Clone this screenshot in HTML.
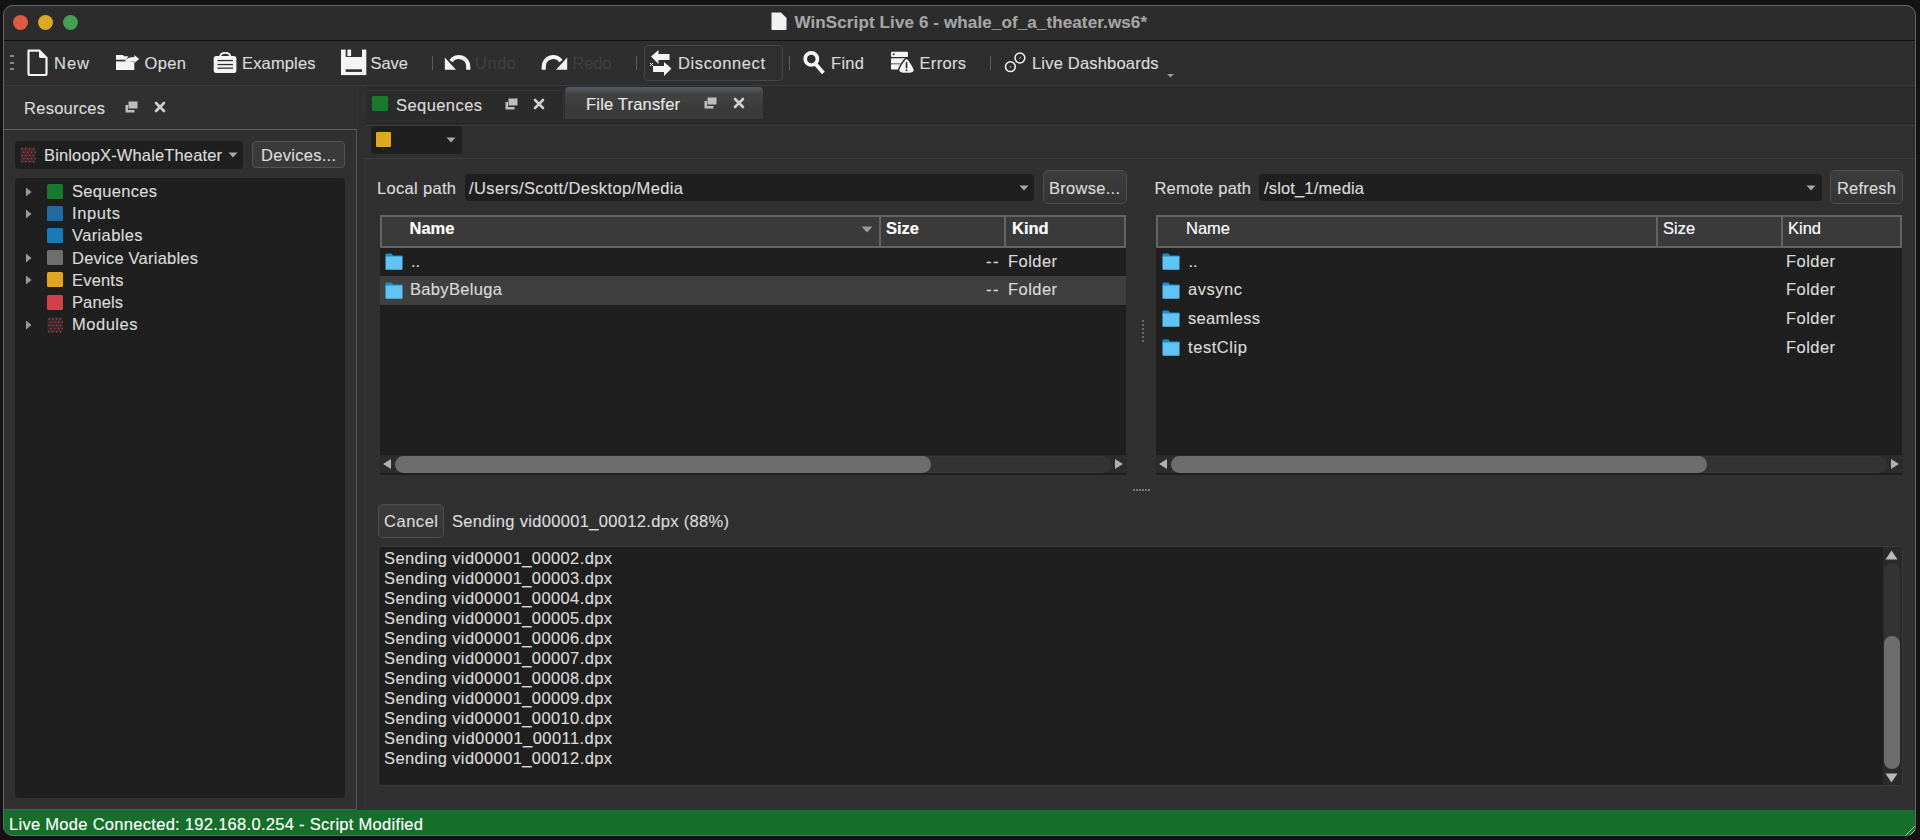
<!DOCTYPE html>
<html><head><meta charset="utf-8">
<style>
*{box-sizing:border-box;margin:0;padding:0}
html,body{width:1920px;height:840px;overflow:hidden;background:#131313;font-family:"Liberation Sans",sans-serif;color:#dcdcdc}
.a{position:absolute}
.t{position:absolute;white-space:nowrap;font-size:16.5px;line-height:20px;-webkit-text-stroke:0.15px currentColor}
svg{display:block}
</style></head><body>
<div class="a" style="left:3px;top:5px;width:1913px;height:831px;background:#303030;border-radius:10px;"></div>
<div class="a" style="left:3px;top:5px;width:1913px;height:35px;background:#2c2c2c;border-radius:10px 10px 0 0;"></div>
<div class="a" style="left:3px;top:40px;width:1913px;height:1px;background:#121212;"></div>
<div class="a" style="left:3px;top:41px;width:1913px;height:44px;background:#2e2e2e;"></div>
<div class="a" style="left:3px;top:85px;width:1913px;height:1px;background:#3a3a3a;"></div>
<div class="a" style="left:3px;top:5px;width:1913px;height:831px;border:1px solid #666666;border-radius:10px;z-index:5;"></div>
<div class="a" style="left:13px;top:15px;width:15px;height:15px;border-radius:50%;background:#de5a44;"></div>
<div class="a" style="left:38px;top:15px;width:15px;height:15px;border-radius:50%;background:#dfa822;"></div>
<div class="a" style="left:63px;top:15px;width:15px;height:15px;border-radius:50%;background:#44a055;"></div>
<svg class="a" style="left:770px;top:11px" width="18" height="20" viewBox="0 0 18 20"><path d="M1.5 1.5 h9.5 l5.5 5.5 v11 a1 1 0 0 1 -1 1 h-13 a1 1 0 0 1 -1 -1z" fill="#f2f2f2"/></svg>
<div class="t" style="left:794.4px;top:12.5px;font-size:17px;color:#a6a6a6;font-weight:bold;letter-spacing:0.124px;">WinScript Live 6 - whale_of_a_theater.ws6*</div>
<div class="a" style="left:10px;top:55px;width:4px;height:2px;background:#8a8a8a;"></div>
<div class="a" style="left:10px;top:62px;width:4px;height:2px;background:#8a8a8a;"></div>
<div class="a" style="left:10px;top:68px;width:4px;height:2px;background:#8a8a8a;"></div>
<svg class="a" style="left:26px;top:48px" width="24" height="29" viewBox="0 0 24 29"><path d="M2.5 2.7 h11 l7 7 v15.8 a1.5 1.5 0 0 1 -1.5 1.5 h-15 a1.5 1.5 0 0 1 -1.5 -1.5z" fill="none" stroke="#f4f4f4" stroke-width="2.2" stroke-linejoin="round"/><path d="M13 2 v6.5 a1.5 1.5 0 0 0 1.5 1.5 h6.5z" fill="#f4f4f4"/></svg>
<div class="t" style="left:54px;top:52.5px;font-size:16.5px;color:#dadada;letter-spacing:0.996px;">New</div>
<svg class="a" style="left:114px;top:52px" width="28" height="20" viewBox="0 0 28 20"><path d="M2 3 H9 L10 4.3 H14.5 L12 7.7 H2z" fill="#f4f4f4"/><path d="M2 9.4 H11.5 L14 9.4 H20.3 V18 H2z" fill="#f4f4f4"/><path d="M10.5 9.4 Q13.5 5 20.4 5 V3 L25.2 7 L20.4 11 V9 Q17 9 15 10z" fill="#f4f4f4"/></svg>
<div class="t" style="left:144.5px;top:52.5px;font-size:16.5px;color:#dadada;letter-spacing:0.379px;">Open</div>
<svg class="a" style="left:212px;top:51px" width="26" height="24" viewBox="0 0 26 24"><path d="M8 5.5 C8.8 0.6 17.6 0.6 18.4 5.5" fill="none" stroke="#f4f4f4" stroke-width="1.8"/><rect x="1.7" y="5.1" width="22.7" height="16.9" rx="2.5" fill="#f4f4f4"/><rect x="5.5" y="8.9" width="15.5" height="1.3" fill="#2e2e2e"/><rect x="5.5" y="12.9" width="15.5" height="1.3" fill="#2e2e2e"/><rect x="5.5" y="16.5" width="15.5" height="1.3" fill="#2e2e2e"/></svg>
<div class="t" style="left:242px;top:52.5px;font-size:16.5px;color:#dadada;letter-spacing:0.151px;">Examples</div>
<svg class="a" style="left:340px;top:49px" width="28" height="27" viewBox="0 0 28 27"><rect x="1" y="0.6" width="25.3" height="25.5" fill="#f4f4f4"/><rect x="5.7" y="0" width="16.3" height="7.9" rx="0.6" fill="#2e2e2e"/><rect x="7.4" y="0.6" width="3.7" height="6.5" fill="#f4f4f4"/><rect x="5.7" y="20.3" width="16.3" height="2.6" fill="#2e2e2e"/></svg>
<div class="t" style="left:370.5px;top:52.5px;font-size:16.5px;color:#dadada;letter-spacing:-0.036px;">Save</div>
<div class="a" style="left:432px;top:56px;width:1.2px;height:14px;background:#5e5e5e;"></div>
<svg class="a" style="left:440px;top:48px" width="32" height="26" viewBox="0 0 32 26"><path d="M28.25 21.7 V18.5 A9.45 9.45 0 0 0 11.06 13.08" fill="none" stroke="#f4f4f4" stroke-width="4.2"/><path d="M4.8 9.6 V21.7 H16z" fill="#f4f4f4"/></svg>
<div class="t" style="left:475px;top:52.5px;font-size:16.5px;color:#404040;letter-spacing:0.518px;">Undo</div>
<svg class="a" style="left:540.2px;top:48px;transform:scaleX(-1)" width="32" height="26" viewBox="0 0 32 26"><path d="M28.25 21.7 V18.5 A9.45 9.45 0 0 0 11.06 13.08" fill="none" stroke="#f4f4f4" stroke-width="4.2"/><path d="M4.8 9.6 V21.7 H16z" fill="#f4f4f4"/></svg>
<div class="t" style="left:572.5px;top:52.5px;font-size:16.5px;color:#404040;letter-spacing:-0.149px;">Redo</div>
<div class="a" style="left:636px;top:56px;width:1.2px;height:14px;background:#5e5e5e;"></div>
<div class="a" style="left:644px;top:45px;width:139px;height:36px;border:1px solid #474747;border-radius:4px;background:#2f2f2f;"></div>
<svg class="a" style="left:648px;top:49px" width="26" height="28" viewBox="0 0 26 28"><path d="M3 7.5 l7.5 -6.5 v4 h11 v6 h-11 v4z" fill="#f4f4f4"/><path d="M23.5 19.5 l-7.5 -6.5 v4 h-11 v6 h11 v4z" fill="#f4f4f4"/><path d="M2 14 l3 3 M5 14 l-3 3" stroke="#f4f4f4" stroke-width="1"/></svg>
<div class="t" style="left:678px;top:52.5px;font-size:16.5px;color:#dadada;letter-spacing:0.598px;">Disconnect</div>
<div class="a" style="left:789px;top:56px;width:1.2px;height:14px;background:#5e5e5e;"></div>
<svg class="a" style="left:802px;top:50px" width="24" height="25" viewBox="0 0 24 25"><circle cx="9.3" cy="8.9" r="6.1" fill="none" stroke="#f4f4f4" stroke-width="3.7"/><path d="M13.2 13.6 L21.4 23" stroke="#f4f4f4" stroke-width="3.8"/></svg>
<div class="t" style="left:831px;top:52.5px;font-size:16.5px;color:#dadada;letter-spacing:0.301px;">Find</div>
<svg class="a" style="left:890px;top:50px" width="26" height="26" viewBox="0 0 26 26"><rect x="1" y="1.7" width="17" height="5.2" rx="1" fill="#f4f4f4"/><circle cx="3.6" cy="4.3" r="1" fill="#2e2e2e"/><rect x="1" y="8.2" width="14" height="5.3" rx="0.8" fill="#f4f4f4"/><rect x="1" y="14.3" width="10" height="5.3" rx="0.8" fill="#f4f4f4"/><path d="M16.5 8.3 C18.2 8.3 24.6 18 24.4 20.5 C24.2 23.6 19 23.5 16.5 23.5 C14 23.5 8.8 23.6 8.6 20.5 C8.4 18 14.8 8.3 16.5 8.3 Z" fill="#f4f4f4" stroke="#2e2e2e" stroke-width="1.5"/><rect x="15.7" y="12" width="1.7" height="6.5" rx="0.8" fill="#2e2e2e"/><circle cx="16.55" cy="20.3" r="0.95" fill="#2e2e2e"/></svg>
<div class="t" style="left:919.5px;top:52.5px;font-size:16.5px;color:#dadada;letter-spacing:0.317px;">Errors</div>
<div class="a" style="left:990px;top:56px;width:1.2px;height:14px;background:#5e5e5e;"></div>
<svg class="a" style="left:1003px;top:51px" width="24" height="23" viewBox="0 0 24 23"><circle cx="7.4" cy="15.7" r="4.9" fill="none" stroke="#f4f4f4" stroke-width="1.5"/><circle cx="16.9" cy="7" r="4.9" fill="none" stroke="#f4f4f4" stroke-width="1.5"/><path d="M6.8 15 l1.2 1.5 M16.3 7.8 l1.6 -2" stroke="#cfcfcf" stroke-width="0.9"/></svg>
<div class="t" style="left:1032px;top:52.5px;font-size:16.5px;color:#dadada;letter-spacing:0.191px;">Live Dashboards</div>
<svg class="a" style="left:1166px;top:73px" width="10" height="6" viewBox="0 0 10 6"><path d="M1 1 h7 l-3.5 3.5z" fill="#9a9a9a"/></svg>
<div class="a" style="left:3px;top:810px;width:1913px;height:26px;background:#166e2b;border-radius:0 0 10px 10px;"></div>
<svg class="a" style="left:1900px;top:820px;z-index:6" width="16" height="16" viewBox="0 0 16 16"><path d="M15 6 L6 15 M15 10 L10 15" stroke="#9fc4a6" stroke-width="1"/></svg>
<div class="t" style="left:9px;top:813.5px;font-size:16.5px;color:#ffffff;letter-spacing:0.294px;">Live Mode Connected: 192.168.0.254 - Script Modified</div>
<div class="t" style="left:24px;top:98.0px;font-size:16.5px;color:#dadada;letter-spacing:0.267px;">Resources</div>
<svg class="a" style="left:125px;top:101px" width="13" height="12" viewBox="0 0 13 12"><rect x="3.5" y="0.5" width="9" height="7" fill="#bdbdbd"/><path d="M0.5 4 v7.5 h9 v-2.5 h-6.5 v-5z" fill="#bdbdbd"/></svg>
<svg class="a" style="left:154px;top:101px" width="12" height="12" viewBox="0 0 12 12"><path d="M2 2 l8 8 M10 2 l-8 8" stroke="#cfcfcf" stroke-width="2.6" stroke-linecap="round"/></svg>
<div class="a" style="left:3px;top:129px;width:354px;height:1px;background:#56616b;"></div>
<div class="a" style="left:356px;top:129px;width:1px;height:681px;background:#4d5862;"></div>
<div class="a" style="left:3px;top:809px;width:354px;height:1px;background:#4d5862;"></div>
<div class="a" style="left:15px;top:141px;width:228px;height:28px;background:#1f1f1f;border-radius:4px;"></div>
<svg class="a" style="left:20px;top:147px" width="16" height="16" viewBox="0 0 16 16"><rect x="0.5" y="0.5" width="15" height="15" fill="#3a2a2c"/><g fill="#c8404a"><circle cx="2.0" cy="2.0" r="0.7"/><circle cx="3.9" cy="5.2" r="0.7"/><circle cx="2.0" cy="8.4" r="0.7"/><circle cx="3.9" cy="11.600000000000001" r="0.7"/><circle cx="2.0" cy="14.8" r="0.7"/><circle cx="5.8" cy="2.0" r="0.7"/><circle cx="7.699999999999999" cy="5.2" r="0.7"/><circle cx="5.8" cy="8.4" r="0.7"/><circle cx="7.699999999999999" cy="11.600000000000001" r="0.7"/><circle cx="5.8" cy="14.8" r="0.7"/><circle cx="9.6" cy="2.0" r="0.7"/><circle cx="11.5" cy="5.2" r="0.7"/><circle cx="9.6" cy="8.4" r="0.7"/><circle cx="11.5" cy="11.600000000000001" r="0.7"/><circle cx="9.6" cy="14.8" r="0.7"/><circle cx="13.399999999999999" cy="2.0" r="0.7"/><circle cx="15.299999999999999" cy="5.2" r="0.7"/><circle cx="13.399999999999999" cy="8.4" r="0.7"/><circle cx="15.299999999999999" cy="11.600000000000001" r="0.7"/><circle cx="13.399999999999999" cy="14.8" r="0.7"/></g></svg>
<div class="t" style="left:44px;top:145.0px;font-size:16.5px;color:#dadada;letter-spacing:0.141px;">BinloopX-WhaleTheater</div>
<svg class="a" style="left:228px;top:152px" width="10" height="6" viewBox="0 0 10 6"><path d="M0.5 0.5 h9 l-4.5 5z" fill="#a8a8a8"/></svg>
<div class="a" style="left:252px;top:141px;width:93px;height:27px;background:#3a3a3a;border:1px solid #535353;border-radius:4px;"></div>
<div class="t" style="left:261px;top:145.0px;font-size:16.5px;color:#dadada;letter-spacing:0.285px;">Devices...</div>
<div class="a" style="left:15px;top:178px;width:330px;height:620px;background:#1f1f1f;border-radius:4px;"></div>
<svg class="a" style="left:25px;top:186.5px" width="8" height="10" viewBox="0 0 8 10"><path d="M1 0.5 v9 l5.5 -4.5z" fill="#9a9a9a"/></svg>
<div class="a" style="left:47px;top:184px;width:16px;height:15px;background:#177a2c;border-radius:1.5px;"></div>
<div class="t" style="left:72px;top:181.0px;font-size:16.5px;color:#dadada;letter-spacing:0.304px;">Sequences</div>
<svg class="a" style="left:25px;top:208.7px" width="8" height="10" viewBox="0 0 8 10"><path d="M1 0.5 v9 l5.5 -4.5z" fill="#9a9a9a"/></svg>
<div class="a" style="left:47px;top:206px;width:16px;height:15px;background:#236b9f;border-radius:1.5px;"></div>
<div class="t" style="left:72px;top:203.2px;font-size:16.5px;color:#dadada;letter-spacing:0.610px;">Inputs</div>
<div class="a" style="left:47px;top:228px;width:16px;height:15px;background:#1a7ab8;border-radius:1.5px;"></div>
<div class="t" style="left:72px;top:225.4px;font-size:16.5px;color:#dadada;letter-spacing:0.367px;">Variables</div>
<svg class="a" style="left:25px;top:253.2px" width="8" height="10" viewBox="0 0 8 10"><path d="M1 0.5 v9 l5.5 -4.5z" fill="#9a9a9a"/></svg>
<div class="a" style="left:47px;top:250px;width:16px;height:15px;background:#6e6e6e;border-radius:1.5px;"></div>
<div class="t" style="left:72px;top:247.7px;font-size:16.5px;color:#dadada;letter-spacing:0.228px;">Device Variables</div>
<svg class="a" style="left:25px;top:275.4px" width="8" height="10" viewBox="0 0 8 10"><path d="M1 0.5 v9 l5.5 -4.5z" fill="#9a9a9a"/></svg>
<div class="a" style="left:47px;top:272px;width:16px;height:15px;background:#e0a61c;border-radius:1.5px;"></div>
<div class="t" style="left:72px;top:269.9px;font-size:16.5px;color:#dadada;letter-spacing:0.191px;">Events</div>
<div class="a" style="left:47px;top:295px;width:16px;height:15px;background:#d2404c;border-radius:1.5px;"></div>
<div class="t" style="left:72px;top:292.1px;font-size:16.5px;color:#dadada;letter-spacing:0.110px;">Panels</div>
<svg class="a" style="left:25px;top:319.8px" width="8" height="10" viewBox="0 0 8 10"><path d="M1 0.5 v9 l5.5 -4.5z" fill="#9a9a9a"/></svg>
<svg class="a" style="left:47px;top:316.8px" width="16" height="16" viewBox="0 0 16 16"><rect x="0.5" y="0.5" width="15" height="15" rx="1" fill="#3a2a2c"/><g fill="#c8404a"><circle cx="2.0" cy="2.0" r="0.7"/><circle cx="3.9" cy="5.2" r="0.7"/><circle cx="2.0" cy="8.4" r="0.7"/><circle cx="3.9" cy="11.600000000000001" r="0.7"/><circle cx="2.0" cy="14.8" r="0.7"/><circle cx="5.8" cy="2.0" r="0.7"/><circle cx="7.699999999999999" cy="5.2" r="0.7"/><circle cx="5.8" cy="8.4" r="0.7"/><circle cx="7.699999999999999" cy="11.600000000000001" r="0.7"/><circle cx="5.8" cy="14.8" r="0.7"/><circle cx="9.6" cy="2.0" r="0.7"/><circle cx="11.5" cy="5.2" r="0.7"/><circle cx="9.6" cy="8.4" r="0.7"/><circle cx="11.5" cy="11.600000000000001" r="0.7"/><circle cx="9.6" cy="14.8" r="0.7"/><circle cx="13.399999999999999" cy="2.0" r="0.7"/><circle cx="15.299999999999999" cy="5.2" r="0.7"/><circle cx="13.399999999999999" cy="8.4" r="0.7"/><circle cx="15.299999999999999" cy="11.600000000000001" r="0.7"/><circle cx="13.399999999999999" cy="14.8" r="0.7"/></g></svg>
<div class="t" style="left:72px;top:314.3px;font-size:16.5px;color:#dadada;letter-spacing:0.522px;">Modules</div>
<div class="a" style="left:357px;top:86px;width:9px;height:724px;background:#2f2f2f;"></div>
<div class="a" style="left:357px;top:86px;width:1px;height:43px;background:repeating-linear-gradient(#393939 0 1.5px,transparent 1.5px 4px);"></div>
<div class="a" style="left:363px;top:86px;width:1px;height:724px;background:repeating-linear-gradient(#3a3a3a 0 1.5px,transparent 1.5px 4px);"></div>
<div class="a" style="left:365px;top:123px;width:1px;height:687px;background:#383838;"></div>
<div class="a" style="left:365px;top:86px;width:1551px;height:37px;background:#2c2c2c;"></div>
<div class="a" style="left:365px;top:90px;width:199px;height:29px;background:#2b2b2b;border:1px solid #353535;border-bottom:none;border-radius:3px 3px 0 0;"></div>
<div class="a" style="left:372px;top:96px;width:16px;height:15px;background:#177a2c;border-radius:1.5px;"></div>
<div class="t" style="left:396px;top:95.0px;font-size:16.5px;color:#dadada;letter-spacing:0.429px;">Sequences</div>
<svg class="a" style="left:505px;top:98px" width="13" height="12" viewBox="0 0 13 12"><rect x="3.5" y="0.5" width="9" height="7" fill="#bdbdbd"/><path d="M0.5 4 v7.5 h9 v-2.5 h-6.5 v-5z" fill="#bdbdbd"/></svg>
<svg class="a" style="left:533px;top:98px" width="12" height="12" viewBox="0 0 12 12"><path d="M2 2 l8 8 M10 2 l-8 8" stroke="#cfcfcf" stroke-width="2.6" stroke-linecap="round"/></svg>
<div class="a" style="left:565px;top:87px;width:198px;height:32px;background:linear-gradient(#535c65 0px,#4b525a 3px,#424242 7px,#404040 12px,#3b3b3b 20px,#3a3a3a 32px);border-radius:4px 4px 0 0;"></div>
<div class="t" style="left:586px;top:94.0px;font-size:16.5px;color:#e6e6e6;letter-spacing:0.192px;">File Transfer</div>
<svg class="a" style="left:704px;top:97px" width="13" height="12" viewBox="0 0 13 12"><rect x="3.5" y="0.5" width="9" height="7" fill="#bdbdbd"/><path d="M0.5 4 v7.5 h9 v-2.5 h-6.5 v-5z" fill="#bdbdbd"/></svg>
<svg class="a" style="left:733px;top:97px" width="12" height="12" viewBox="0 0 12 12"><path d="M2 2 l8 8 M10 2 l-8 8" stroke="#cfcfcf" stroke-width="2.6" stroke-linecap="round"/></svg>
<div class="a" style="left:365px;top:123px;width:1551px;height:35px;background:#2f2f2f;"></div>
<div class="a" style="left:365px;top:123px;width:1551px;height:1px;background:#242424;"></div>
<div class="a" style="left:365px;top:125px;width:1551px;height:1px;background:#3a3a3a;"></div>
<div class="a" style="left:365px;top:158px;width:1551px;height:1px;background:#3b3b3b;"></div>
<div class="a" style="left:371px;top:126px;width:91px;height:28px;background:#1f1f1f;border-radius:4px;"></div>
<div class="a" style="left:376px;top:132px;width:15px;height:15px;background:#e0a81e;border-radius:1px;"></div>
<svg class="a" style="left:446px;top:137px" width="10" height="6" viewBox="0 0 10 6"><path d="M0.5 0.5 h9 l-4.5 5z" fill="#a8a8a8"/></svg>
<div class="t" style="left:377px;top:177.5px;font-size:16.5px;color:#dadada;letter-spacing:0.317px;">Local path</div>
<div class="a" style="left:465px;top:174px;width:569px;height:27px;background:#1f1f1f;border-radius:4px;"></div>
<div class="t" style="left:469px;top:177.5px;font-size:16.5px;color:#dadada;letter-spacing:0.380px;">/Users/Scott/Desktop/Media</div>
<svg class="a" style="left:1019px;top:185px" width="10" height="6" viewBox="0 0 10 6"><path d="M0.5 0.5 h9 l-4.5 5z" fill="#a8a8a8"/></svg>
<div class="a" style="left:1043px;top:170px;width:84px;height:34px;background:linear-gradient(#3d3d3d,#343434);border:1px solid #4e4e4e;border-radius:5px;"></div>
<div class="t" style="left:1049px;top:177.5px;font-size:16.5px;color:#dadada;letter-spacing:0.279px;">Browse...</div>
<div class="t" style="left:1154.5px;top:177.5px;font-size:16.5px;color:#dadada;letter-spacing:0.203px;">Remote path</div>
<div class="a" style="left:1259px;top:174px;width:563px;height:27px;background:#1f1f1f;border-radius:4px;"></div>
<div class="t" style="left:1264px;top:177.5px;font-size:16.5px;color:#dadada;letter-spacing:0.155px;">/slot_1/media</div>
<svg class="a" style="left:1806px;top:185px" width="10" height="6" viewBox="0 0 10 6"><path d="M0.5 0.5 h9 l-4.5 5z" fill="#a8a8a8"/></svg>
<div class="a" style="left:1830px;top:170px;width:73px;height:34px;background:linear-gradient(#3d3d3d,#343434);border:1px solid #4e4e4e;border-radius:5px;"></div>
<div class="t" style="left:1837px;top:177.5px;font-size:16.5px;color:#dadada;letter-spacing:0.204px;">Refresh</div>
<div class="a" style="left:380px;top:215px;width:746px;height:260px;background:#1f1f1f;"></div>
<div class="a" style="left:380px;top:215px;width:746px;height:33px;background:#3a3a3a;border:2px solid #636363;"></div>
<div class="t" style="left:409.5px;top:218.0px;font-size:16.5px;color:#ffffff;font-weight:bold;">Name</div>
<div class="a" style="left:879px;top:217px;width:2px;height:29px;background:#636363;"></div>
<div class="t" style="left:886px;top:218.0px;font-size:16.5px;color:#ffffff;font-weight:bold;">Size</div>
<div class="a" style="left:1004px;top:217px;width:2px;height:29px;background:#636363;"></div>
<div class="t" style="left:1012px;top:218.0px;font-size:16.5px;color:#ffffff;font-weight:bold;">Kind</div>
<svg class="a" style="left:385px;top:253px" width="18" height="18" viewBox="0 0 18 18"><path d="M0.5 1.5 q0 -1 1 -1 h5 l1.5 2 h9 q0.5 0 0.5 0.5 v2 h-17z" fill="#1d8ccc"/><path d="M0.5 3.5 h17 v12.5 q0 0.8 -0.8 0.8 h-15.4 q-0.8 0 -0.8 -0.8z" fill="#5fc3f4"/></svg>
<div class="t" style="left:411px;top:250.5px;font-size:16.5px;color:#dadada;">..</div>
<div class="t" style="left:986px;top:250.5px;font-size:16.5px;color:#dadada;letter-spacing:1.500px;">--</div>
<div class="t" style="left:1008px;top:250.5px;font-size:16.5px;color:#dadada;letter-spacing:0.446px;">Folder</div>
<div class="a" style="left:380px;top:276px;width:746px;height:29px;background:#3f3f3f;"></div>
<svg class="a" style="left:385px;top:282px" width="18" height="18" viewBox="0 0 18 18"><path d="M0.5 1.5 q0 -1 1 -1 h5 l1.5 2 h9 q0.5 0 0.5 0.5 v2 h-17z" fill="#1d8ccc"/><path d="M0.5 3.5 h17 v12.5 q0 0.8 -0.8 0.8 h-15.4 q-0.8 0 -0.8 -0.8z" fill="#5fc3f4"/></svg>
<div class="t" style="left:410px;top:279.2px;font-size:16.5px;color:#dadada;letter-spacing:0.335px;">BabyBeluga</div>
<div class="t" style="left:986px;top:279.2px;font-size:16.5px;color:#dadada;letter-spacing:1.500px;">--</div>
<div class="t" style="left:1008px;top:279.2px;font-size:16.5px;color:#dadada;letter-spacing:0.446px;">Folder</div>
<div class="a" style="left:380px;top:455px;width:746px;height:19px;background:#2b2b2b;border-bottom:1px solid #1e1e1e;"></div>
<svg class="a" style="left:861px;top:226px" width="12" height="7" viewBox="0 0 12 7"><path d="M0.5 0.5 h11 l-5.5 6z" fill="#9a9a9a"/></svg>
<div class="a" style="left:1156px;top:215px;width:746px;height:260px;background:#1f1f1f;"></div>
<div class="a" style="left:1156px;top:215px;width:746px;height:33px;background:#3a3a3a;border:2px solid #636363;"></div>
<div class="t" style="left:1186px;top:218.0px;font-size:16.5px;color:#ffffff;">Name</div>
<div class="a" style="left:1656px;top:217px;width:2px;height:29px;background:#636363;"></div>
<div class="t" style="left:1663px;top:218.0px;font-size:16.5px;color:#ffffff;">Size</div>
<div class="a" style="left:1781px;top:217px;width:2px;height:29px;background:#636363;"></div>
<div class="t" style="left:1788px;top:218.0px;font-size:16.5px;color:#ffffff;">Kind</div>
<svg class="a" style="left:1162px;top:253px" width="18" height="18" viewBox="0 0 18 18"><path d="M0.5 1.5 q0 -1 1 -1 h5 l1.5 2 h9 q0.5 0 0.5 0.5 v2 h-17z" fill="#1d8ccc"/><path d="M0.5 3.5 h17 v12.5 q0 0.8 -0.8 0.8 h-15.4 q-0.8 0 -0.8 -0.8z" fill="#5fc3f4"/></svg>
<div class="t" style="left:1188.5px;top:250.5px;font-size:16.5px;color:#dadada;">..</div>
<svg class="a" style="left:1162px;top:282px" width="18" height="18" viewBox="0 0 18 18"><path d="M0.5 1.5 q0 -1 1 -1 h5 l1.5 2 h9 q0.5 0 0.5 0.5 v2 h-17z" fill="#1d8ccc"/><path d="M0.5 3.5 h17 v12.5 q0 0.8 -0.8 0.8 h-15.4 q-0.8 0 -0.8 -0.8z" fill="#5fc3f4"/></svg>
<div class="t" style="left:1188px;top:279.2px;font-size:16.5px;color:#dadada;letter-spacing:0.529px;">avsync</div>
<svg class="a" style="left:1162px;top:310px" width="18" height="18" viewBox="0 0 18 18"><path d="M0.5 1.5 q0 -1 1 -1 h5 l1.5 2 h9 q0.5 0 0.5 0.5 v2 h-17z" fill="#1d8ccc"/><path d="M0.5 3.5 h17 v12.5 q0 0.8 -0.8 0.8 h-15.4 q-0.8 0 -0.8 -0.8z" fill="#5fc3f4"/></svg>
<div class="t" style="left:1188px;top:307.8px;font-size:16.5px;color:#dadada;letter-spacing:0.330px;">seamless</div>
<svg class="a" style="left:1162px;top:339px" width="18" height="18" viewBox="0 0 18 18"><path d="M0.5 1.5 q0 -1 1 -1 h5 l1.5 2 h9 q0.5 0 0.5 0.5 v2 h-17z" fill="#1d8ccc"/><path d="M0.5 3.5 h17 v12.5 q0 0.8 -0.8 0.8 h-15.4 q-0.8 0 -0.8 -0.8z" fill="#5fc3f4"/></svg>
<div class="t" style="left:1188px;top:336.5px;font-size:16.5px;color:#dadada;letter-spacing:0.569px;">testClip</div>
<div class="a" style="left:1156px;top:455px;width:746px;height:19px;background:#2b2b2b;border-bottom:1px solid #1e1e1e;"></div>
<div class="t" style="left:1786px;top:250.5px;font-size:16.5px;color:#dadada;letter-spacing:0.446px;">Folder</div>
<div class="t" style="left:1786px;top:279.2px;font-size:16.5px;color:#dadada;letter-spacing:0.446px;">Folder</div>
<div class="t" style="left:1786px;top:307.8px;font-size:16.5px;color:#dadada;letter-spacing:0.446px;">Folder</div>
<div class="t" style="left:1786px;top:336.5px;font-size:16.5px;color:#dadada;letter-spacing:0.446px;">Folder</div>
<svg class="a" style="left:382px;top:458px" width="10" height="12" viewBox="0 0 10 12"><path d="M1 6 l8 -5 v10z" fill="#b0b0b0"/></svg>
<div class="a" style="left:395px;top:456px;width:716px;height:17px;background:#333333;border:1px solid #393939;border-radius:8.5px;"></div>
<div class="a" style="left:395px;top:456px;width:536px;height:17px;background:#6d6d6d;border-radius:8.5px;"></div>
<svg class="a" style="left:1114px;top:458px" width="10" height="12" viewBox="0 0 10 12"><path d="M9 6 l-8 -5 v10z" fill="#b0b0b0"/></svg>
<svg class="a" style="left:1158px;top:458px" width="10" height="12" viewBox="0 0 10 12"><path d="M1 6 l8 -5 v10z" fill="#b0b0b0"/></svg>
<div class="a" style="left:1171px;top:456px;width:716px;height:17px;background:#333333;border:1px solid #393939;border-radius:8.5px;"></div>
<div class="a" style="left:1171px;top:456px;width:536px;height:17px;background:#6d6d6d;border-radius:8.5px;"></div>
<svg class="a" style="left:1890px;top:458px" width="10" height="12" viewBox="0 0 10 12"><path d="M9 6 l-8 -5 v10z" fill="#b0b0b0"/></svg>
<div class="a" style="left:1142px;top:320.0px;width:2px;height:2px;background:#727272;border-radius:0.5px;"></div>
<div class="a" style="left:1133px;top:489px;width:2px;height:2px;background:#7a7a7a;"></div>
<div class="a" style="left:1142px;top:323.9px;width:2px;height:2px;background:#727272;border-radius:0.5px;"></div>
<div class="a" style="left:1136px;top:489px;width:2px;height:2px;background:#7a7a7a;"></div>
<div class="a" style="left:1142px;top:327.8px;width:2px;height:2px;background:#727272;border-radius:0.5px;"></div>
<div class="a" style="left:1139px;top:489px;width:2px;height:2px;background:#7a7a7a;"></div>
<div class="a" style="left:1142px;top:331.7px;width:2px;height:2px;background:#727272;border-radius:0.5px;"></div>
<div class="a" style="left:1142px;top:489px;width:2px;height:2px;background:#7a7a7a;"></div>
<div class="a" style="left:1142px;top:335.6px;width:2px;height:2px;background:#727272;border-radius:0.5px;"></div>
<div class="a" style="left:1145px;top:489px;width:2px;height:2px;background:#7a7a7a;"></div>
<div class="a" style="left:1142px;top:339.5px;width:2px;height:2px;background:#727272;border-radius:0.5px;"></div>
<div class="a" style="left:1148px;top:489px;width:2px;height:2px;background:#7a7a7a;"></div>
<div class="a" style="left:378px;top:504px;width:66px;height:34px;background:linear-gradient(#3d3d3d,#343434);border:1px solid #4e4e4e;border-radius:5px;"></div>
<div class="t" style="left:384px;top:511.0px;font-size:16.5px;color:#dadada;letter-spacing:0.528px;">Cancel</div>
<div class="t" style="left:452px;top:511.0px;font-size:16.5px;color:#dadada;letter-spacing:0.324px;">Sending vid00001_00012.dpx (88%)</div>
<div class="a" style="left:378px;top:546px;width:1525px;height:240px;background:#1f1f1f;border:1px solid #3a3a3a;border-radius:4px;"></div>
<div class="t" style="left:384px;top:547.5px;font-size:16.5px;color:#dadada;letter-spacing:0.386px;">Sending vid00001_00002.dpx</div>
<div class="t" style="left:384px;top:567.5px;font-size:16.5px;color:#dadada;letter-spacing:0.386px;">Sending vid00001_00003.dpx</div>
<div class="t" style="left:384px;top:587.5px;font-size:16.5px;color:#dadada;letter-spacing:0.386px;">Sending vid00001_00004.dpx</div>
<div class="t" style="left:384px;top:607.5px;font-size:16.5px;color:#dadada;letter-spacing:0.386px;">Sending vid00001_00005.dpx</div>
<div class="t" style="left:384px;top:627.5px;font-size:16.5px;color:#dadada;letter-spacing:0.386px;">Sending vid00001_00006.dpx</div>
<div class="t" style="left:384px;top:647.5px;font-size:16.5px;color:#dadada;letter-spacing:0.386px;">Sending vid00001_00007.dpx</div>
<div class="t" style="left:384px;top:667.5px;font-size:16.5px;color:#dadada;letter-spacing:0.386px;">Sending vid00001_00008.dpx</div>
<div class="t" style="left:384px;top:687.5px;font-size:16.5px;color:#dadada;letter-spacing:0.386px;">Sending vid00001_00009.dpx</div>
<div class="t" style="left:384px;top:707.5px;font-size:16.5px;color:#dadada;letter-spacing:0.386px;">Sending vid00001_00010.dpx</div>
<div class="t" style="left:384px;top:727.5px;font-size:16.5px;color:#dadada;letter-spacing:0.435px;">Sending vid00001_00011.dpx</div>
<div class="t" style="left:384px;top:747.5px;font-size:16.5px;color:#dadada;letter-spacing:0.386px;">Sending vid00001_00012.dpx</div>
<div class="a" style="left:1883px;top:547px;width:19px;height:238px;background:#2a2a2a;"></div>
<svg class="a" style="left:1885px;top:550px" width="13" height="10" viewBox="0 0 13 10"><path d="M6.5 0.5 l6 9 h-12z" fill="#b8b8b8"/></svg>
<div class="a" style="left:1884px;top:563px;width:16px;height:206px;background:#333333;border-radius:8px;"></div>
<div class="a" style="left:1884px;top:636px;width:16px;height:133px;background:#6d6d6d;border-radius:8px;"></div>
<svg class="a" style="left:1885px;top:773px" width="13" height="10" viewBox="0 0 13 10"><path d="M6.5 9.5 l6 -9 h-12z" fill="#b8b8b8"/></svg>
</body></html>
